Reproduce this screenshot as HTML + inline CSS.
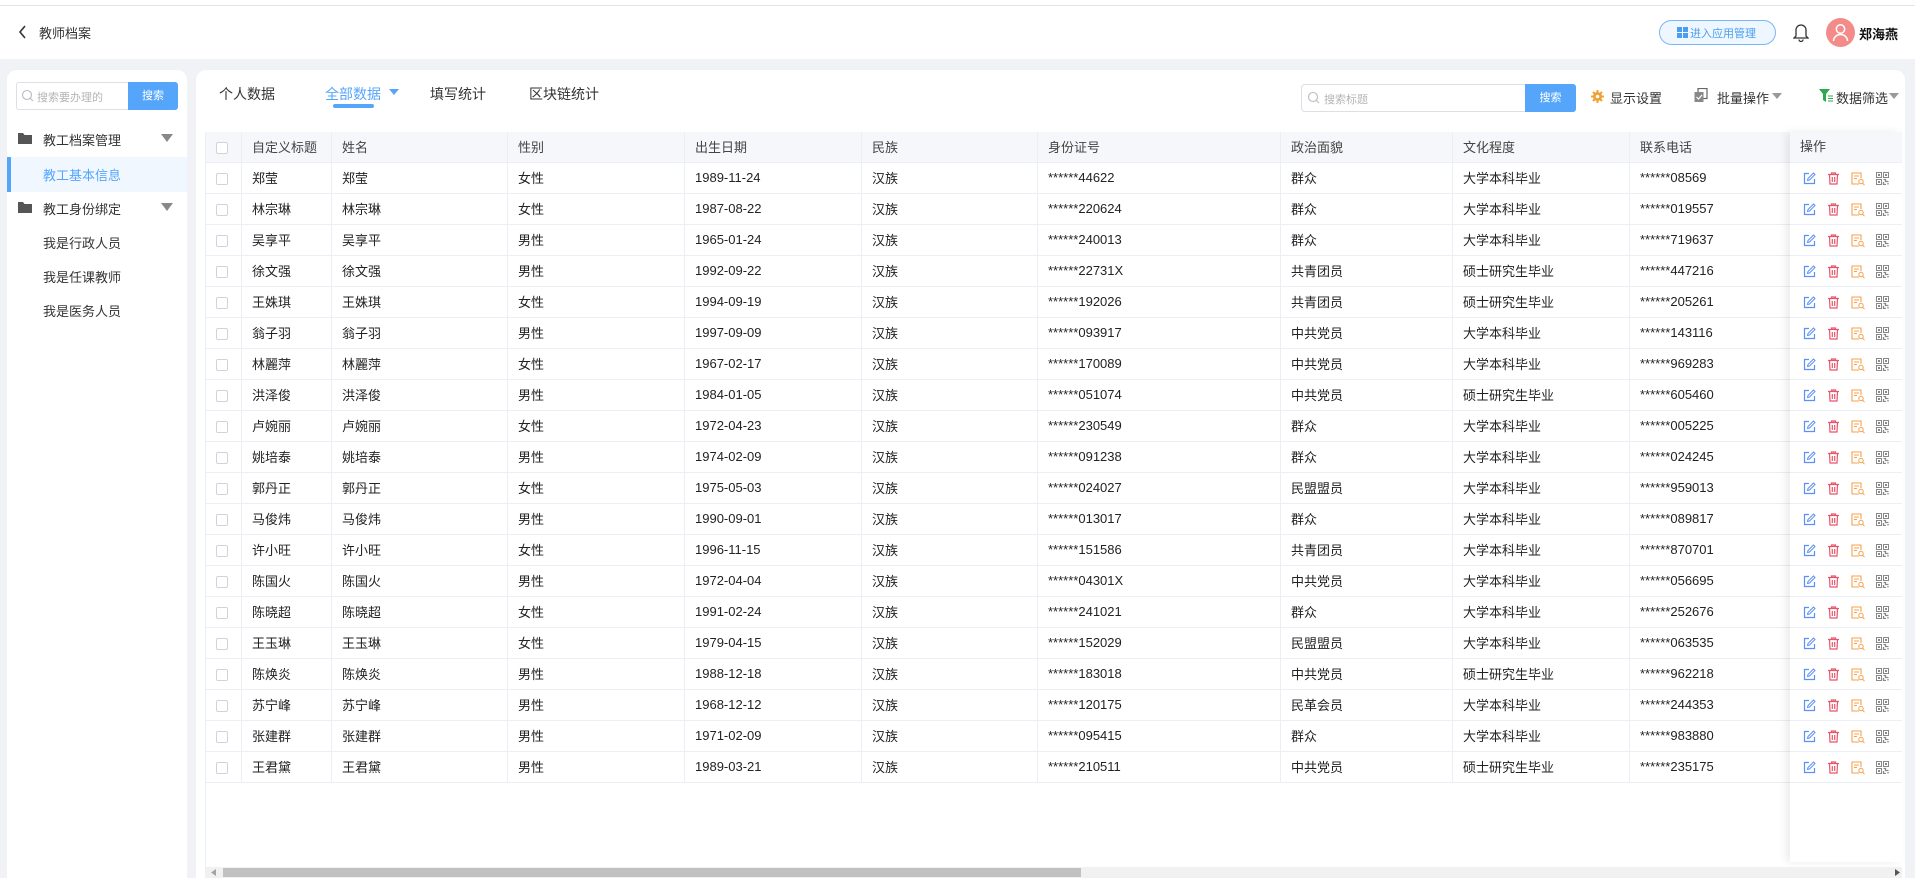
<!DOCTYPE html>
<html style="overflow:hidden;height:878px"><head><meta charset="utf-8">
<style>
*{box-sizing:border-box;margin:0;padding:0}
body{width:1915px;height:878px;overflow:hidden;background:#f0f2f5;font-family:"Liberation Sans","Noto Sans CJK SC",sans-serif;font-size:13px;color:#333;position:relative}
.abs{position:absolute}
#hdr{left:0;top:0;width:1915px;height:59px;background:#fff}
#topline{left:0;top:5px;width:1915px;height:1px;background:#e4e4e4}
#side{left:7px;top:70px;width:180px;height:808px;background:#fff;border-radius:10px 10px 0 0}
#main{left:196px;top:70px;width:1709px;height:808px;background:#fff;border-radius:10px 10px 0 0}
.mi{position:absolute;left:43px;font-size:13px;color:#333}
table{border-collapse:collapse;table-layout:fixed}
td{height:31px;border-bottom:1px solid #ebeef5;border-right:1px solid #ebeef5;padding-left:10px;white-space:nowrap;font-size:13px;color:#222}
tr.h td{background:#f5f7fa;height:30px;color:#444}
.cb{display:inline-block;width:12px;height:12px;border:1px solid #d0d4da;border-radius:2px;background:#fff;vertical-align:middle}
</style></head><body>
<div id="hdr" class="abs"></div>
<div id="topline" class="abs"></div>
<svg class="abs" style="left:18px;top:25px" width="10" height="14"><path d="M7 1 L2 7 L7 13" stroke="#333" stroke-width="1.6" fill="none"/></svg>
<div class="abs" style="left:39px;top:23px;font-size:13px;color:#333">教师档案</div>
<div class="abs" style="left:1659px;top:20px;width:117px;height:25px;border:1px solid #79b6f7;background:#eef6ff;border-radius:13px"></div>
<svg class="abs" style="left:1677px;top:27px" width="11" height="11"><rect x="0" y="0" width="5" height="5" fill="#4a9ef0"/><rect x="6" y="0" width="5" height="5" fill="#4a9ef0"/><rect x="0" y="6" width="5" height="5" fill="#4a9ef0"/><rect x="6" y="6" width="5" height="5" fill="#4a9ef0"/></svg>
<div class="abs" style="left:1690px;top:25px;font-size:11px;color:#4a9ef0">进入应用管理</div>
<svg class="abs" style="left:1793px;top:22px" width="16" height="20"><path d="M3 14 V8 a5 5 0 0 1 10 0 V14 L15 16 H1 Z M6 17.5 a2 2 0 0 0 4 0" stroke="#333" stroke-width="1.3" fill="none"/></svg>
<div class="abs" style="left:1826px;top:18px;width:29px;height:29px;border-radius:50%;background:#f48b8b"></div>
<svg class="abs" style="left:1832px;top:23px" width="17" height="19"><circle cx="8.5" cy="6" r="4.2" stroke="#fff" stroke-width="1.5" fill="none"/><path d="M1.5 18 a7 6.5 0 0 1 14 0" stroke="#fff" stroke-width="1.5" fill="none"/></svg>
<div class="abs" style="left:1859px;top:24px;font-size:13px;font-weight:bold;color:#111">郑海燕</div>

<div id="side" class="abs"></div>
<div class="abs" style="left:16px;top:82px;width:113px;height:28px;border:1px solid #dcdfe6;border-radius:3px 0 0 3px;background:#fff"></div>
<svg class="abs" style="left:21px;top:89px" width="13" height="13"><circle cx="6" cy="6" r="4.5" stroke="#bbb" stroke-width="1.1" fill="none"/><path d="M9.5 9.5 L12 12" stroke="#bbb" stroke-width="1.1"/></svg>
<div class="abs" style="left:37px;top:89px;font-size:11px;color:#b5b5b5">搜索要办理的</div>
<div class="abs" style="left:128px;top:82px;width:50px;height:28px;background:#55a6fb;border-radius:0 3px 3px 0;color:#fff;font-size:11px;text-align:center;line-height:28px">搜索</div>
<svg class="abs" style="left:18px;top:132px" width="14" height="12"><path d="M0 1 H5 L6.5 3 H14 V12 H0Z" fill="#555"/></svg>
<div class="mi" style="top:130px">教工档案管理</div>
<svg class="abs" style="left:161px;top:134px" width="12" height="8"><path d="M0 0 H12 L6 8Z" fill="#888"/></svg>
<div class="abs" style="left:7px;top:157px;width:180px;height:35px;background:#f0f7ff"></div>
<div class="abs" style="left:7px;top:157px;width:4px;height:35px;background:#55a6fb"></div>
<div class="mi" style="top:165px;color:#55a6fb">教工基本信息</div>
<svg class="abs" style="left:18px;top:201px" width="14" height="12"><path d="M0 1 H5 L6.5 3 H14 V12 H0Z" fill="#555"/></svg>
<div class="mi" style="top:199px">教工身份绑定</div>
<svg class="abs" style="left:161px;top:203px" width="12" height="8"><path d="M0 0 H12 L6 8Z" fill="#888"/></svg>
<div class="mi" style="top:233px">我是行政人员</div>
<div class="mi" style="top:267px">我是任课教师</div>
<div class="mi" style="top:301px">我是医务人员</div>

<div id="main" class="abs"></div>
<div class="abs" style="left:219px;top:84px;font-size:14px">个人数据</div>
<div class="abs" style="left:325px;top:84px;font-size:14px;color:#55a6fb">全部数据</div>
<svg class="abs" style="left:389px;top:89px" width="10" height="7"><path d="M0 0 H10 L5 6Z" fill="#55a6fb"/></svg>
<div class="abs" style="left:333px;top:104px;width:41px;height:4px;border-radius:2px;background:#55a6fb"></div>
<div class="abs" style="left:430px;top:84px;font-size:14px">填写统计</div>
<div class="abs" style="left:529px;top:84px;font-size:14px">区块链统计</div>

<div class="abs" style="left:1301px;top:84px;width:226px;height:28px;border:1px solid #dcdfe6;border-radius:4px 0 0 4px"></div>
<svg class="abs" style="left:1307px;top:91px" width="13" height="13"><circle cx="6" cy="6" r="4.5" stroke="#bbb" stroke-width="1.1" fill="none"/><path d="M9.5 9.5 L12 12" stroke="#bbb" stroke-width="1.1"/></svg>
<div class="abs" style="left:1324px;top:91px;font-size:11px;color:#b5b5b5">搜索标题</div>
<div class="abs" style="left:1525px;top:84px;width:51px;height:28px;background:#55a6fb;border-radius:0 3px 3px 0;color:#fff;font-size:11px;text-align:center;line-height:28px">搜索</div>

<svg class="abs" style="left:1591px;top:90px" width="13" height="13"><path d="M6.5 0 V13 M0 6.5 H13 M2 2 L11 11 M11 2 L2 11" stroke="#f0a030" stroke-width="2"/><circle cx="6.5" cy="6.5" r="4.5" fill="#f0a030"/><circle cx="6.5" cy="6.5" r="1.8" fill="#fff"/></svg>
<div class="abs" style="left:1610px;top:88px;font-size:13px">显示设置</div>
<svg class="abs" style="left:1694px;top:88px" width="14" height="15"><rect x="4" y="0.5" width="9" height="10" fill="none" stroke="#666" stroke-width="1.2"/><rect x="0.5" y="4" width="9" height="10" fill="#888"/><path d="M2.5 9 L4.5 11 L8 7" stroke="#fff" stroke-width="1.2" fill="none"/></svg>
<div class="abs" style="left:1717px;top:88px;font-size:13px">批量操作</div>
<svg class="abs" style="left:1772px;top:93px" width="10" height="6"><path d="M0 0 H10 L5 6Z" fill="#999"/></svg>
<svg class="abs" style="left:1819px;top:89px" width="14" height="13"><path d="M0 0 H11 L7 5 V13 L4 11 V5Z" fill="#2aa94f"/><path d="M9 7 H14 M9 9.5 H14 M9 12 H14" stroke="#2aa94f" stroke-width="1"/></svg>
<div class="abs" style="left:1836px;top:88px;font-size:13px">数据筛选</div>
<svg class="abs" style="left:1889px;top:93px" width="10" height="6"><path d="M0 0 H10 L5 6Z" fill="#999"/></svg>

<div class="abs" style="left:205px;top:132px;width:1697px;height:1px;background:#ebeef5"></div>
<table class="abs" style="left:205px;top:132px;width:1585px;border-left:1px solid #ebeef5">
<colgroup><col style="width:36px"><col style="width:90px"><col style="width:176px"><col style="width:177px"><col style="width:177px"><col style="width:176px"><col style="width:243px"><col style="width:172px"><col style="width:177px"><col style="width:161px"></colgroup>
<tr class="h"><td><span class="cb"></span></td><td>自定义标题</td><td>姓名</td><td>性别</td><td>出生日期</td><td>民族</td><td>身份证号</td><td>政治面貌</td><td>文化程度</td><td>联系电话</td></tr>
<tr><td><span class="cb"></span></td><td>郑莹</td><td>郑莹</td><td>女性</td><td>1989-11-24</td><td>汉族</td><td>******44622</td><td>群众</td><td>大学本科毕业</td><td>******08569</td></tr>
<tr><td><span class="cb"></span></td><td>林宗琳</td><td>林宗琳</td><td>女性</td><td>1987-08-22</td><td>汉族</td><td>******220624</td><td>群众</td><td>大学本科毕业</td><td>******019557</td></tr>
<tr><td><span class="cb"></span></td><td>吴享平</td><td>吴享平</td><td>男性</td><td>1965-01-24</td><td>汉族</td><td>******240013</td><td>群众</td><td>大学本科毕业</td><td>******719637</td></tr>
<tr><td><span class="cb"></span></td><td>徐文强</td><td>徐文强</td><td>男性</td><td>1992-09-22</td><td>汉族</td><td>******22731X</td><td>共青团员</td><td>硕士研究生毕业</td><td>******447216</td></tr>
<tr><td><span class="cb"></span></td><td>王姝琪</td><td>王姝琪</td><td>女性</td><td>1994-09-19</td><td>汉族</td><td>******192026</td><td>共青团员</td><td>硕士研究生毕业</td><td>******205261</td></tr>
<tr><td><span class="cb"></span></td><td>翁子羽</td><td>翁子羽</td><td>男性</td><td>1997-09-09</td><td>汉族</td><td>******093917</td><td>中共党员</td><td>大学本科毕业</td><td>******143116</td></tr>
<tr><td><span class="cb"></span></td><td>林麗萍</td><td>林麗萍</td><td>女性</td><td>1967-02-17</td><td>汉族</td><td>******170089</td><td>中共党员</td><td>大学本科毕业</td><td>******969283</td></tr>
<tr><td><span class="cb"></span></td><td>洪泽俊</td><td>洪泽俊</td><td>男性</td><td>1984-01-05</td><td>汉族</td><td>******051074</td><td>中共党员</td><td>硕士研究生毕业</td><td>******605460</td></tr>
<tr><td><span class="cb"></span></td><td>卢婉丽</td><td>卢婉丽</td><td>女性</td><td>1972-04-23</td><td>汉族</td><td>******230549</td><td>群众</td><td>大学本科毕业</td><td>******005225</td></tr>
<tr><td><span class="cb"></span></td><td>姚培泰</td><td>姚培泰</td><td>男性</td><td>1974-02-09</td><td>汉族</td><td>******091238</td><td>群众</td><td>大学本科毕业</td><td>******024245</td></tr>
<tr><td><span class="cb"></span></td><td>郭丹正</td><td>郭丹正</td><td>女性</td><td>1975-05-03</td><td>汉族</td><td>******024027</td><td>民盟盟员</td><td>大学本科毕业</td><td>******959013</td></tr>
<tr><td><span class="cb"></span></td><td>马俊炜</td><td>马俊炜</td><td>男性</td><td>1990-09-01</td><td>汉族</td><td>******013017</td><td>群众</td><td>大学本科毕业</td><td>******089817</td></tr>
<tr><td><span class="cb"></span></td><td>许小旺</td><td>许小旺</td><td>女性</td><td>1996-11-15</td><td>汉族</td><td>******151586</td><td>共青团员</td><td>大学本科毕业</td><td>******870701</td></tr>
<tr><td><span class="cb"></span></td><td>陈国火</td><td>陈国火</td><td>男性</td><td>1972-04-04</td><td>汉族</td><td>******04301X</td><td>中共党员</td><td>大学本科毕业</td><td>******056695</td></tr>
<tr><td><span class="cb"></span></td><td>陈晓超</td><td>陈晓超</td><td>女性</td><td>1991-02-24</td><td>汉族</td><td>******241021</td><td>群众</td><td>大学本科毕业</td><td>******252676</td></tr>
<tr><td><span class="cb"></span></td><td>王玉琳</td><td>王玉琳</td><td>女性</td><td>1979-04-15</td><td>汉族</td><td>******152029</td><td>民盟盟员</td><td>大学本科毕业</td><td>******063535</td></tr>
<tr><td><span class="cb"></span></td><td>陈焕炎</td><td>陈焕炎</td><td>男性</td><td>1988-12-18</td><td>汉族</td><td>******183018</td><td>中共党员</td><td>硕士研究生毕业</td><td>******962218</td></tr>
<tr><td><span class="cb"></span></td><td>苏宁峰</td><td>苏宁峰</td><td>男性</td><td>1968-12-12</td><td>汉族</td><td>******120175</td><td>民革会员</td><td>大学本科毕业</td><td>******244353</td></tr>
<tr><td><span class="cb"></span></td><td>张建群</td><td>张建群</td><td>男性</td><td>1971-02-09</td><td>汉族</td><td>******095415</td><td>群众</td><td>大学本科毕业</td><td>******983880</td></tr>
<tr><td><span class="cb"></span></td><td>王君黛</td><td>王君黛</td><td>男性</td><td>1989-03-21</td><td>汉族</td><td>******210511</td><td>中共党员</td><td>硕士研究生毕业</td><td>******235175</td></tr>
</table>
<div class="abs" style="left:205px;top:132px;width:1px;height:736px;background:#ebeef5"></div>

<div class="abs" style="left:1790px;top:132px;width:112px;height:730px;background:#fff;box-shadow:-4px 0 8px rgba(0,0,0,0.08)"></div>
<div class="abs" style="left:1790px;top:132px;width:112px;height:31px;background:#f5f7fa;border-bottom:1px solid #ebeef5;padding-left:10px;line-height:30px;font-size:13px;color:#444">操作</div>
<div id="oprows"></div>

<div class="abs" style="left:205px;top:867px;width:1697px;height:11px;background:#f1f1f1"></div>
<div class="abs" style="left:223px;top:868px;width:858px;height:9px;background:#c1c1c1"></div>
<svg class="abs" style="left:211px;top:869px" width="6" height="7"><path d="M5 0 L0 3.5 L5 7Z" fill="#a3a3a3"/></svg>
<svg class="abs" style="left:1895px;top:869px" width="6" height="7"><path d="M0 0 L5 3.5 L0 7Z" fill="#555"/></svg>

<script>
var h='';
for(var i=0;i<20;i++){
 var y=163+i*31;
 h+='<div class="abs" style="left:1790px;top:'+y+'px;width:112px;height:31px;border-bottom:1px solid #ebeef5"></div>';
 var t=y+9;
 h+='<svg class="abs" style="left:1803px;top:'+t+'px" width="13" height="13"><path d="M6 1.5 H1.5 V11.5 H11.5 V7" stroke="#5b8ff9" stroke-width="1.2" fill="none"/><path d="M4.5 8.5 L5 6.5 L10.5 1 L12 2.5 L6.5 8Z" stroke="#5b8ff9" stroke-width="1" fill="none"/></svg>';
 h+='<svg class="abs" style="left:1827px;top:'+t+'px" width="13" height="13"><path d="M1 2.5 H12 M4.5 2.5 V1 H8.5 V2.5 M2.5 2.5 L3 12 H10 L10.5 2.5 M5.3 5 V10 M7.7 5 V10" stroke="#e8546a" stroke-width="1.2" fill="none"/></svg>';
 h+='<svg class="abs" style="left:1851px;top:'+t+'px" width="14" height="14"><path d="M8 12 H1 V1 H10 V6" stroke="#f5a04a" stroke-width="1.1" fill="none"/><path d="M3 4 H8 M3 6.5 H6" stroke="#f5a04a" stroke-width="1"/><circle cx="10" cy="9.5" r="2.2" stroke="#f5a04a" stroke-width="1" fill="none"/><path d="M11.6 11.2 L13.5 13.2" stroke="#f5a04a" stroke-width="1"/></svg>';
 h+='<svg class="abs" style="left:1876px;top:'+t+'px" width="13" height="13"><rect x="0.5" y="0.5" width="5" height="5" stroke="#888" fill="none"/><rect x="7.5" y="0.5" width="5" height="5" stroke="#888" fill="none"/><rect x="0.5" y="7.5" width="5" height="5" stroke="#888" fill="none"/><rect x="2" y="2" width="2" height="2" fill="#888"/><rect x="9" y="2" width="2" height="2" fill="#888"/><rect x="2" y="9" width="2" height="2" fill="#888"/><path d="M7.5 7.5 H9.5 V9.5 H12.5 M7.5 10 V12.5 H10 M12 11 V12.5" stroke="#888" stroke-width="1.3" fill="none"/></svg>';
}
document.getElementById('oprows').innerHTML=h;
</script>
</body></html>
